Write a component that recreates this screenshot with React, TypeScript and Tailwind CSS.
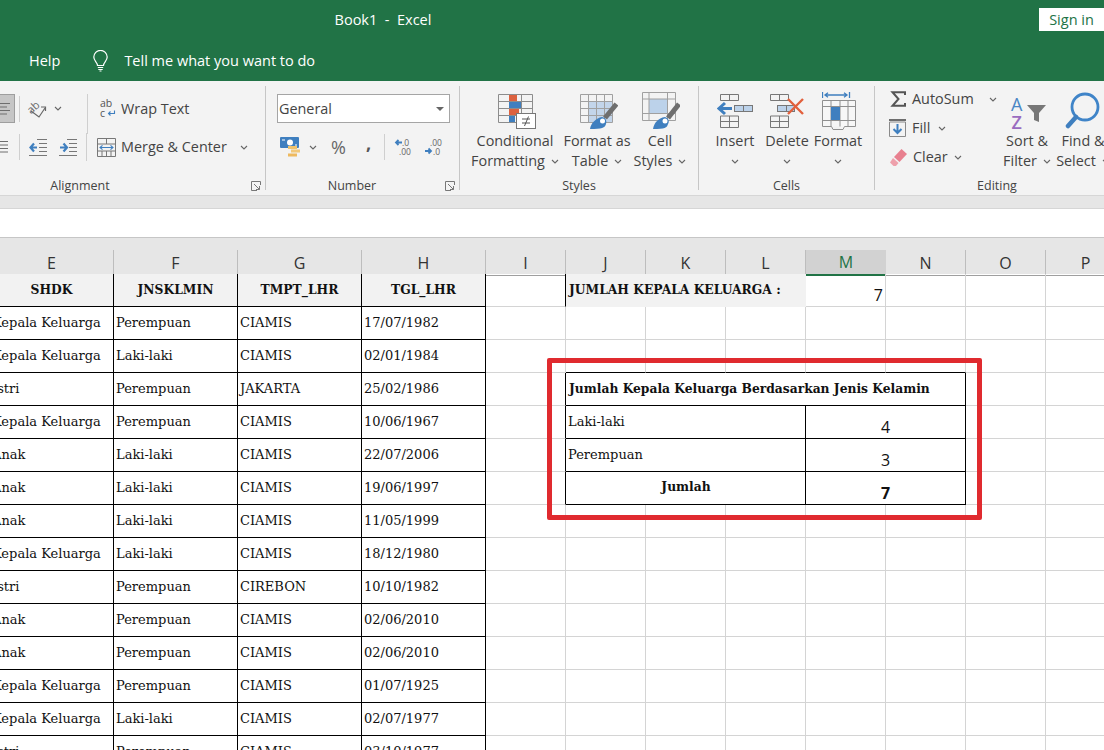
import type { ReactNode } from 'react';

const UI = "font-['Open_Sans',sans-serif]";
const SHEET = "font-['DejaVu_Serif',serif]";

const rows = [
  ['Kepala Keluarga', 'Perempuan', 'CIAMIS', '17/07/1982'],
  ['Kepala Keluarga', 'Laki-laki', 'CIAMIS', '02/01/1984'],
  ['Istri', 'Perempuan', 'JAKARTA', '25/02/1986'],
  ['Kepala Keluarga', 'Perempuan', 'CIAMIS', '10/06/1967'],
  ['Anak', 'Laki-laki', 'CIAMIS', '22/07/2006'],
  ['Anak', 'Laki-laki', 'CIAMIS', '19/06/1997'],
  ['Anak', 'Laki-laki', 'CIAMIS', '11/05/1999'],
  ['Kepala Keluarga', 'Laki-laki', 'CIAMIS', '18/12/1980'],
  ['Istri', 'Perempuan', 'CIREBON', '10/10/1982'],
  ['Anak', 'Perempuan', 'CIAMIS', '02/06/2010'],
  ['Anak', 'Perempuan', 'CIAMIS', '02/06/2010'],
  ['Kepala Keluarga', 'Perempuan', 'CIAMIS', '01/07/1925'],
  ['Kepala Keluarga', 'Laki-laki', 'CIAMIS', '02/07/1977'],
  ['Istri', 'Perempuan', 'CIAMIS', '03/10/1977'],
];

function Chevron({ className = '' }: { className?: string }) {
  return (
    <svg width="8" height="5" viewBox="0 0 8 5" className={`shrink-0 ${className}`}>
      <path d="M1 1l3 3 3-3" fill="none" stroke="#666" strokeWidth="1.1" />
    </svg>
  );
}

function Bulb() {
  return (
    <svg width="17" height="22" viewBox="0 0 17 22" fill="none" stroke="#fff" strokeWidth="1.2">
      <path d="M5.5 15.5c0-3-3.7-4.5-3.7-8.4a6.7 6.7 0 0 1 13.4 0c0 3.900-3.700 5.400-3.700 8.400z" />
      <path d="M5.800 17.500h5.400M6.300 19.500h4.400M7.500 21h2" />
    </svg>
  );
}

function Launcher() {
  return (
    <svg width="10" height="10" viewBox="0 0 10 10" fill="none" stroke="#777" strokeWidth="1">
      <path d="M9.500 4V.5H.5v9H6" />
      <path d="M3 3l5.500 5.500M8.500 5v3.500H5" />
    </svg>
  );
}

function AlignLines() {
  return (
    <svg width="10" height="12" viewBox="0 0 10 12" stroke="#6e6e6e" strokeWidth="1">
      <path d="M0 .5h10M0 4h7M0 7.500h10M0 11h7" />
    </svg>
  );
}

function Orientation() {
  return (
    <svg width="20" height="20" viewBox="0 0 20 20" fill="none" overflow="visible">
      <text x="0" y="12" fontSize="11" fill="#666" transform="rotate(-42 6 10)" fontFamily="Open Sans">ab</text>
      <path d="M3 12l8 6 6-9M13 8h4.500v4" stroke="#666" strokeWidth="1.200" />
    </svg>
  );
}

function WrapIcon() {
  return (
    <svg width="16" height="19" viewBox="0 0 16 19" fill="none" overflow="visible">
      <text x="0" y="8" fontSize="10.500" fill="#555" fontFamily="Open Sans">ab</text>
      <text x="0" y="18" fontSize="10.500" fill="#555" fontFamily="Open Sans">c</text>
      <path d="M14.500 11.500v3h-6M10.500 12.500l-2 2 2 2" stroke="#3f7fbf" strokeWidth="1.100" />
    </svg>
  );
}

function Indent({ flip = false }: { flip?: boolean }) {
  return (
    <svg width="18" height="17" viewBox="0 0 18 17" fill="none">
      <path d="M8 .5h10M10 4.500h8M10 8.500h8M10 12.500h8M0 16.500h18" stroke="#777" />
      <path
        d={flip ? 'M1 8.500h6M4.500 4.500l3.500 4-3.500 4' : 'M8 8.500H2M5 4.500l-3.500 4 3.500 4'}
        stroke="#3f7fbf"
        strokeWidth="2.200"
      />
    </svg>
  );
}

function MergeIcon() {
  return (
    <svg width="19" height="19" viewBox="0 0 19 19" fill="none">
      <path d="M.5.500h18v18H.5zM.5 6h18M.5 13h18M9.500.5V6M9.500 13v5.500M5 13v5.500M14 13v5.500" stroke="#777" />
      <path d="M3 9.500h13M5.500 7.300L3 9.500l2.500 2.200M13.500 7.300l2.500 2.200-2.500 2.200" stroke="#3f7fbf" strokeWidth="1.100" />
    </svg>
  );
}

function Money() {
  return (
    <svg width="20" height="20" viewBox="0 0 20 20">
      <rect x="0" y="0" width="19" height="11" rx="1" fill="#3f7fbf" />
      <circle cx="10" cy="5.500" r="3" fill="#fff" />
      <path d="M2 3h3M15 8h2" stroke="#fff" strokeWidth="1.200" />
      <rect x="8" y="9" width="9" height="3" fill="#f0c36d" />
      <rect x="11" y="12.500" width="9" height="3" fill="#f2c879" />
      <rect x="8" y="16.500" width="9" height="3" fill="#eeb95e" />
    </svg>
  );
}

function Decimal({ more = false }: { more?: boolean }) {
  return (
    <svg width="18" height="18" viewBox="0 0 18 18" fill="none" overflow="visible">
      <text x={more ? 5 : 7} y="7.500" fontSize="8.500" fill="#666" fontFamily="Open Sans">{more ? '.00' : '.0'}</text>
      <text x={more ? 8 : 4} y="17" fontSize="8.500" fill="#666" fontFamily="Open Sans">{more ? '.0' : '.00'}</text>
      {more ? (
        <path d="M0 13h5.500M3.500 10.500L6 13l-2.500 2.500" stroke="#3f7fbf" strokeWidth="1.800" />
      ) : (
        <path d="M7 4.500H1.500M3.500 2L1 4.500 3.500 7" stroke="#3f7fbf" strokeWidth="1.800" />
      )}
    </svg>
  );
}

function CondFormat() {
  return (
    <svg width="38" height="36" viewBox="0 0 38 36" fill="none">
      <path d="M.5.500h34v28H.5zM.5 7.500h34M.5 14.500h34M.5 21.500h34M11.500.5v28M23.500.5v28" stroke="#8c8c8c" />
      <rect x="11" y="1" width="8" height="6" fill="#dc6240" />
      <rect x="11" y="8" width="12" height="6" fill="#3f7fbf" />
      <rect x="11" y="15" width="10" height="6" fill="#dc6240" />
      <rect x="11" y="22" width="6" height="6" fill="#3f7fbf" />
      <rect x="18.500" y="19.500" width="19" height="15" fill="#fff" stroke="#777" />
      <path d="M24 25h8M24 29h8M30.500 22.500l-4 9.500" stroke="#555" />
    </svg>
  );
}

function TableStyle() {
  return (
    <svg width="38" height="36" viewBox="0 0 38 36" fill="none">
      <rect x="8" y="7" width="24" height="21" fill="#c3d5ea" />
      <path d="M.5.500h32v28H.5zM.5 7.500h32M.5 14.500h32M.5 21.500h32M8.500.5v28M16.500.5v28M24.500.5v28" stroke="#a0a0a0" />
      <path d="M36.500 10L25 24" stroke="#6e6e6e" strokeWidth="5" />
      <path d="M10 35c1-6 6-11 12-12 4 1 5 4 4 7-1 4-4 5-16 5z" fill="#3f7fbf" />
      <circle cx="22.500" cy="27" r="2.500" fill="#fff" />
    </svg>
  );
}

function CellStyle() {
  return (
    <svg width="38" height="38" viewBox="0 0 38 38" fill="none">
      <rect x="7" y="7" width="18" height="14" fill="#bcd2ea" />
      <path d="M.5.500h33v28H.5zM.5 7h33M.5 21.500h33M7 .5v28M25.500.5v28" stroke="#a0a0a0" />
      <path d="M37 12L26 26" stroke="#6e6e6e" strokeWidth="5" />
      <path d="M11 37c1-6 5-11 12-12 3 1 5 4 3 7-1 4-3 5-15 5z" fill="#3f7fbf" />
      <circle cx="23" cy="29" r="2.500" fill="#fff" />
    </svg>
  );
}

function InsertIcon() {
  return (
    <svg width="36" height="36" viewBox="0 0 36 36" fill="none">
      <path d="M3.500.5h18v6h-18zM12.500.5v6M3.500 22h18v11.500h-18zM3.500 27.500h18M12.500 22v11.500" stroke="#777" />
      <rect x="17.500" y="11.500" width="18" height="6" fill="#bcd2ea" stroke="#777" />
      <path d="M26.500 11.500v6" stroke="#777" />
      <path d="M15 14.500H3M8 9L2 14.500 8 20" stroke="#3f7fbf" strokeWidth="3" />
    </svg>
  );
}

function DeleteIcon() {
  return (
    <svg width="36" height="36" viewBox="0 0 36 36" fill="none">
      <path d="M.5.500h18v6H.5zM9.500.5v6M.5 22h18v11.500H.5zM.5 27.500h18M9.500 22v11.500" stroke="#777" />
      <rect x="7.500" y="11.500" width="17" height="6" fill="#bcd2ea" stroke="#777" />
      <path d="M16.500 11.500v6" stroke="#777" />
      <path d="M18 5l15 15M33 5L18 20" stroke="#e2603c" strokeWidth="2.400" />
    </svg>
  );
}

function FormatIcon() {
  return (
    <svg width="34" height="38" viewBox="0 0 34 38" fill="none">
      <path d="M.5 0v6M27.500 0v6M3 3h22M6 .8L3 3l3 2.200M22 .8L25 3l-3 2.200" stroke="#3f7fbf" strokeWidth="1.300" />
      <rect x=".5" y="8.500" width="33" height="26" fill="#f7f7f7" />
      <path d="M.5 8.500h33v26l-11 0-1.500 3h-10l-1.500-3h-9zM.5 14.500h33M.5 28.500h33M9 8.500v26M18 8.500v26M26 8.500v26" stroke="#909090" />
      <rect x="9" y="15" width="9" height="13" fill="#3f7fbf" />
    </svg>
  );
}

function Sigma() {
  return (
    <svg width="16" height="16" viewBox="0 0 16 16" fill="none">
      <path d="M15 4V1.200H2.500L8.500 8l-6 6.800H15V12" stroke="#555" strokeWidth="2" />
    </svg>
  );
}

function FillIcon() {
  return (
    <svg width="17" height="18" viewBox="0 0 17 18" fill="none">
      <path d="M.5 3h16v14.500H.5z" stroke="#8a8a8a" />
      <path d="M0 1h17" stroke="#6e6e6e" strokeWidth="2" />
      <path d="M8.500 5v9M4.500 10l4 4 4-4" stroke="#3f7fbf" strokeWidth="2" />
    </svg>
  );
}

function Eraser() {
  return (
    <svg width="17" height="17" viewBox="0 0 17 17">
      <path d="M11.500 0L17 5l-7.500 8L4 8z" fill="#e8808f" />
      <path d="M3 9l5.500 5-2.500 3H3.500L0 13.500z" fill="#eea0ab" />
    </svg>
  );
}

function SortIcon() {
  return (
    <svg width="36" height="34" viewBox="0 0 36 34" overflow="visible">
      <text x="0" y="15" fontSize="18" fill="#4a86c5" fontFamily="Open Sans">A</text>
      <text x="0.500" y="33" fontSize="18" fontWeight="600" fill="#9a6cc0" fontFamily="Open Sans">Z</text>
      <path d="M16 9h19l-7 8v9l-5-2v-7z" fill="#777" />
    </svg>
  );
}

function FindIcon() {
  return (
    <svg width="36" height="38" viewBox="0 0 36 38" fill="none">
      <circle cx="20" cy="15" r="13" stroke="#3f84c8" strokeWidth="2.800" />
      <path d="M11 25L3 34" stroke="#3f7fbf" strokeWidth="4.500" strokeLinecap="round" />
    </svg>
  );
}

function BigButton({ width, icon, lines, iconClass = '' }: { width: string; icon: ReactNode; lines: [string, string?]; iconClass?: string }) {
  return (
    <div className={`flex shrink-0 flex-col items-center ${width}`}>
      <div className={`flex h-[50px] items-end pb-[1px] ${iconClass}`}>{icon}</div>
      <div className="flex h-[20px] items-center whitespace-nowrap">{lines[0]}</div>
      <div className="flex h-[20px] items-center gap-[6px] whitespace-nowrap">
        {lines[1]}
        <Chevron />
      </div>
    </div>
  );
}

function Group({ width, label, children, labelRow }: { width: string; label?: string; children: ReactNode; labelRow?: ReactNode }) {
  return (
    <div className={`flex h-full shrink-0 flex-col ${width}`}>
      <div className="flex-1">{children}</div>
      {labelRow ?? <div className="flex h-[20px] items-center justify-center pt-[2px] text-[12.500px]">{label}</div>}
    </div>
  );
}

function Sep() {
  return <div className="my-[5px] w-px shrink-0 bg-[#c6c6c6]" />;
}

function Ribbon() {
  return (
    <div className={`flex h-[114px] overflow-hidden bg-[#f3f3f3] text-[14.400px] text-[#444] ${UI}`}>
      <Group
        width="w-[265px]"
        labelRow={
          <div className="flex h-[20px] items-center pt-[2px] text-[12.500px]">
            <div className="w-[160px] text-center">Alignment</div>
            <div className="ml-[91px] flex"><Launcher /></div>
          </div>
        }
      >
        <div className="mt-[13px] flex h-[29px] items-center">
          <div className="flex h-[29px] w-[15px] items-center border-y border-r border-[#9e9e9e] bg-[#c6c6c6]">
            <AlignLines />
          </div>
          <div className="ml-[4px] h-[26px] w-px bg-[#cfcfcf]" />
          <div className="ml-[8px]"><Orientation /></div>
          <Chevron className="ml-[6px]" />
          <div className="ml-[25px] h-[40px] w-px self-start bg-[#cfcfcf]" />
          <div className="ml-[12px]"><WrapIcon /></div>
          <div className="ml-[5px]">Wrap Text</div>
        </div>
        <div className="mt-[10px] flex h-[28px] items-center">
          <svg width="8" height="12" viewBox="0 0 8 12" stroke="#6e6e6e"><path d="M0 .5h8M0 4h8M0 7.500h8M0 11h8" /></svg>
          <div className="ml-[11px] h-[26px] w-px bg-[#cfcfcf]" />
          <div className="ml-[9px]"><Indent /></div>
          <div className="ml-[12px]"><Indent flip /></div>
          <div className="ml-[9px] h-[28px] w-px bg-[#cfcfcf]" />
          <div className="ml-[10px]"><MergeIcon /></div>
          <div className="ml-[5px] w-[112px] whitespace-nowrap">Merge &amp; Center</div>
          <Chevron className="ml-[7px]" />
        </div>
      </Group>
      <Sep />
      <Group
        width="w-[193px]"
        labelRow={
          <div className="flex h-[20px] items-center pt-[2px] text-[12.500px]">
            <div className="w-[172px] text-center">Number</div>
            <div className="ml-[7px] flex"><Launcher /></div>
          </div>
        }
      >
        <div className="ml-[11px] mt-[13px] flex h-[29px] w-[173px] items-center justify-between border border-[#a5a5a5] bg-white pl-[1px] pr-[5px]">
          General
          <div className="h-0 w-0 border-x-[4px] border-t-[4px] border-x-transparent border-t-[#666]" />
        </div>
        <div className="mt-[14px] flex h-[20px] items-center">
          <div className="ml-[14px]"><Money /></div>
          <Chevron className="ml-[9px]" />
          <div className="ml-[14px] text-[18px] leading-none text-[#666]">%</div>
          <div className="mb-[8px] ml-[20px] text-[18px] font-bold leading-none text-[#555]">,</div>
          <div className="ml-[13px] h-[26px] w-px bg-[#cfcfcf]" />
          <div className="ml-[10px]"><Decimal /></div>
          <div className="ml-[12px]"><Decimal more /></div>
        </div>
      </Group>
      <Sep />
      <Group width="w-[238px]" label="Styles">
        <div className="ml-[10px] flex">
          <BigButton width="w-[90px]" icon={<CondFormat />} lines={['Conditional', 'Formatting']} iconClass="pl-[3px]" />
          <BigButton width="w-[74px]" icon={<TableStyle />} lines={['Format as', 'Table']} iconClass="pl-[3px]" />
          <BigButton width="w-[52px]" icon={<CellStyle />} lines={['Cell', 'Styles']} iconClass="pl-[2px]" />
        </div>
      </Group>
      <Sep />
      <Group width="w-[175px]" label="Cells">
        <div className="ml-[11px] flex">
          <BigButton width="w-[50px]" icon={<InsertIcon />} lines={['Insert']} />
          <BigButton width="w-[54px]" icon={<DeleteIcon />} lines={['Delete']} iconClass="pl-[2px]" />
          <BigButton width="w-[48px]" icon={<FormatIcon />} lines={['Format']} iconClass="pl-[1px]" />
        </div>
      </Group>
      <Sep />
      <Group width="w-[244px]" label="Editing">
        <div className="flex">
          <div className="w-[124px] shrink-0 pt-[6px]">
            <div className="flex h-[24px] items-center pl-[15px]">
              <Sigma />
              <span className="ml-[6px]">AutoSum</span>
              <Chevron className="ml-[15px]" />
            </div>
            <div className="mt-[5px] flex h-[24px] items-center pl-[14px]">
              <FillIcon />
              <span className="ml-[6px]">Fill</span>
              <Chevron className="ml-[8px]" />
            </div>
            <div className="mt-[5px] flex h-[24px] items-center pl-[15px]">
              <Eraser />
              <span className="ml-[6px]">Clear</span>
              <Chevron className="ml-[6px]" />
            </div>
          </div>
          <BigButton width="w-[56px]" icon={<SortIcon />} lines={['Sort &', 'Filter']} iconClass="pl-[4px]" />
          <BigButton width="w-[56px]" icon={<FindIcon />} lines={['Find &', 'Select']} />
        </div>
      </Group>
    </div>
  );
}

function ColHeader({ name, active = false }: { name: string; active?: boolean }) {
  return (
    <div
      className={
        active
          ? 'flex items-center justify-center border-b-2 border-[#217346] bg-[#d2d2d2] text-[#217346]'
          : 'flex items-center justify-center border-b border-r border-b-[#9f9f9f] border-r-[#bdbdbd]'
      }
    >
      {name}
    </div>
  );
}

const plain = 'border-b border-r border-[#d4d4d4]';
const black = 'border-b border-r border-black';

function RightCells({ idx }: { idx: number }) {
  const iBorder = idx === 0 || (idx >= 3 && idx <= 6) ? 'border-b border-r border-b-[#d4d4d4] border-r-black' : plain;
  const blank = <div className={plain} />;
  if (idx === 0) {
    return (
      <>
        <div className={iBorder} />
        <div className="col-span-3 flex items-center border-b border-[#f2f2f2] bg-[#f2f2f2] pl-[3px] text-[12.300px] font-bold whitespace-nowrap">
          JUMLAH KEPALA KELUARGA :
        </div>
        <div className={`${plain} flex items-end justify-end pr-[2px] text-[16px] leading-[22px] ${UI}`}>7</div>
        {blank}{blank}{blank}
      </>
    );
  }
  if (idx === 2) {
    return (
      <>
        {blank}
        <div className="border-b border-r border-b-black border-r-[#d4d4d4]" />
        <div className="border-b border-r border-b-black border-r-[#d4d4d4]" />
        <div className="border-b border-r border-b-black border-r-[#d4d4d4]" />
        <div className="border-b border-r border-b-black border-r-[#d4d4d4]" />
        <div className="border-b border-r border-b-black border-r-[#d4d4d4]" />
        {blank}{blank}
      </>
    );
  }
  if (idx === 3) {
    return (
      <>
        <div className={iBorder} />
        <div className={`col-span-5 flex items-center pl-[3px] text-[12.300px] font-bold whitespace-nowrap ${black}`}>
          Jumlah Kepala Keluarga Berdasarkan Jenis Kelamin
        </div>
        {blank}{blank}
      </>
    );
  }
  if (idx >= 4 && idx <= 6) {
    const labels = ['Laki-laki', 'Perempuan', 'Jumlah'];
    const values = ['4', '3', '7'];
    const total = idx === 6;
    return (
      <>
        <div className={iBorder} />
        <div className={`col-span-3 flex items-center pb-[1px] pl-[2px] ${black} ${total ? 'justify-center pr-[1px] text-[12.300px] font-bold' : ''}`}>
          {labels[idx - 4]}
        </div>
        <div className={`col-span-2 flex items-end justify-center text-[16px] leading-[22px] ${UI} ${black} ${total ? 'font-bold' : ''}`}>
          {values[idx - 4]}
        </div>
        {blank}{blank}
      </>
    );
  }
  return (
    <>
      {blank}{blank}{blank}{blank}{blank}{blank}{blank}{blank}
    </>
  );
}

function Sheet() {
  return (
    <div className="relative h-[512px] overflow-hidden bg-white">
      <div className="ml-[-10px] w-[1136px]">
        <div className="h-[12px] bg-[#e6e6e6]" />
        <div className={`grid h-[24px] grid-cols-[124px_124px_124px_124px_repeat(8,80px)] bg-[#e6e6e6] text-[16px] text-[#333] ${UI}`}>
          {['E', 'F', 'G', 'H', 'I', 'J', 'K', 'L'].map((c) => (
            <ColHeader key={c} name={c} />
          ))}
          <ColHeader name="M" active />
          {['N', 'O', 'P'].map((c) => (
            <ColHeader key={c} name={c} />
          ))}
        </div>
        <div className={`grid auto-rows-[33px] grid-cols-[124px_124px_124px_124px_repeat(8,80px)] text-[13px] text-[#111] ${SHEET}`}>
          {['SHDK', 'JNSKLMIN', 'TMPT_LHR', 'TGL_LHR'].map((h) => (
            <div key={h} className={`flex items-center justify-center bg-[#f2f2f2] text-[12.300px] font-bold ${black}`}>
              {h}
            </div>
          ))}
          <RightCells idx={0} />
          {rows.map((row, i) => (
            <div key={i} className="contents">
              {row.map((v, j) => (
                <div key={j} className={`flex items-center whitespace-nowrap pl-[2px] ${black}`}>
                  {v}
                </div>
              ))}
              <RightCells idx={i + 1} />
            </div>
          ))}
        </div>
      </div>
      <div className="absolute left-[547px] top-[120px] h-[162px] w-[435px] rounded-[2px] border-[5px] border-[#e02a2f]" />
    </div>
  );
}

export default function App() {
  return (
    <div className="h-[750px] w-[1104px] overflow-hidden bg-white">
      <div className={`flex h-[81px] flex-col bg-[#217346] text-[14.500px] text-white ${UI}`}>
        <div className="relative flex h-[40px] items-center justify-center pr-[338px]">
          <span className="whitespace-pre">Book1  -  Excel</span>
          <div className="absolute right-0 top-[8px] flex h-[23px] w-[65px] items-center justify-center bg-white text-[#217346]">
            Sign in
          </div>
        </div>
        <div className="flex h-[41px] items-center">
          <span className="ml-[29px]">Help</span>
          <div className="ml-[32px]"><Bulb /></div>
          <span className="ml-[15px]">Tell me what you want to do</span>
        </div>
      </div>
      <Ribbon />
      <div className="h-[14px] border-y border-[#d6d6d6] bg-[#e6e6e6]" />
      <div className="h-[29px] border-b border-[#c6c6c6] bg-white" />
      <Sheet />
    </div>
  );
}
